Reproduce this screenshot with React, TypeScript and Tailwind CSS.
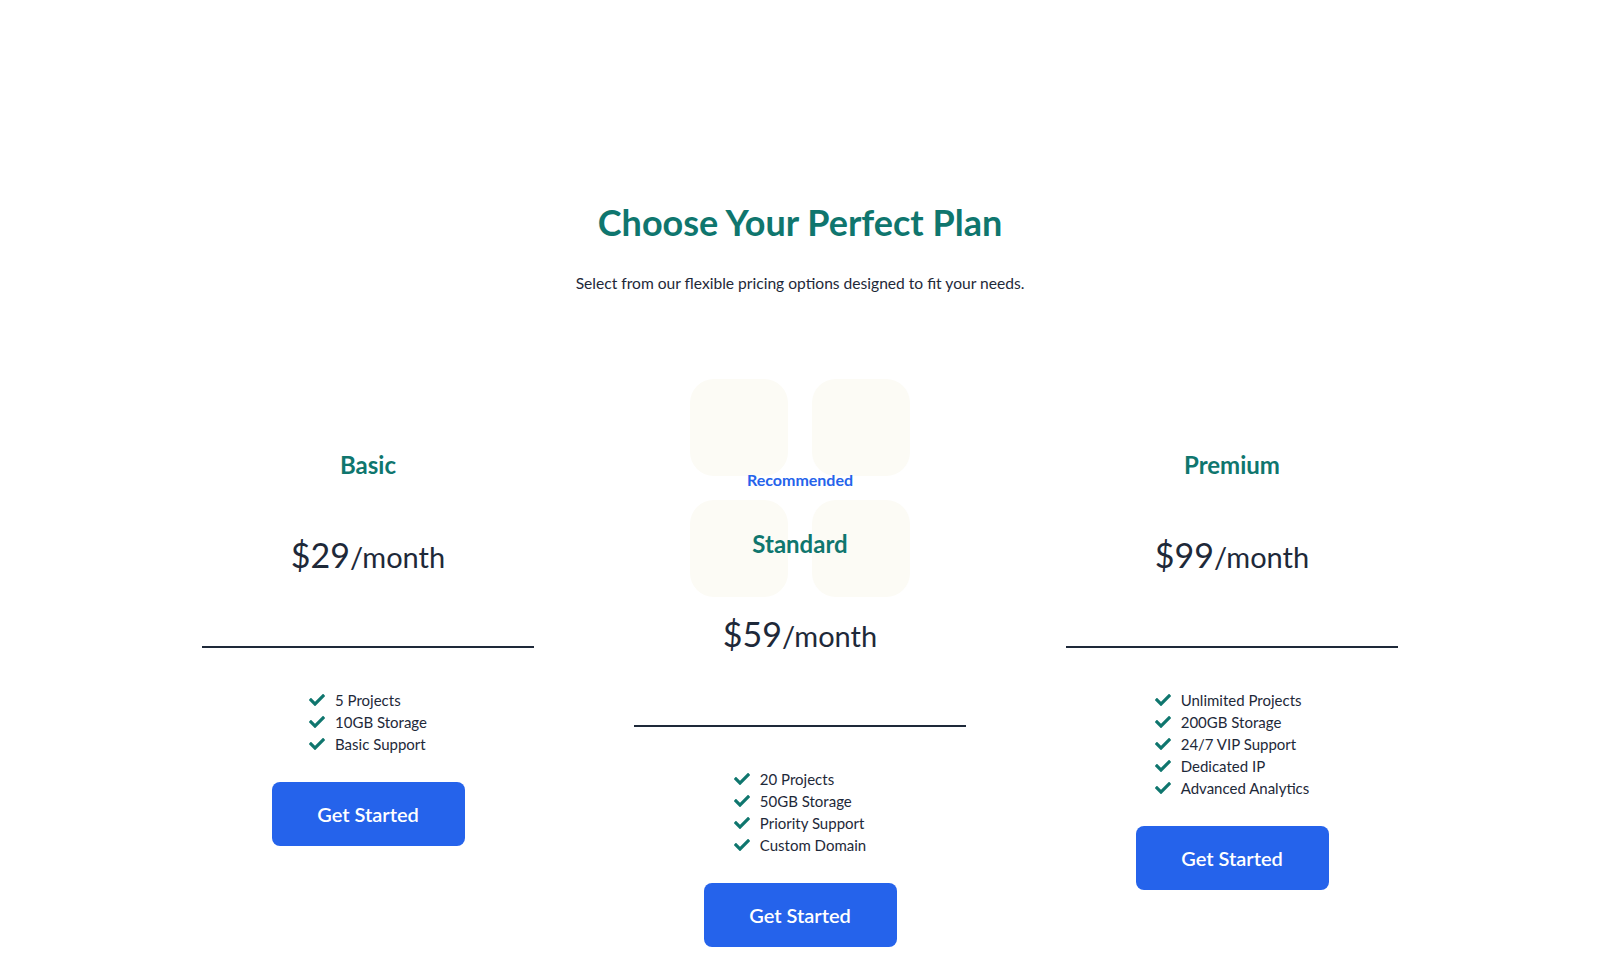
import { FaCheck } from "react-icons/fa";

interface Plan {
  name: string;
  price: string;
  features: string[];
  recommended?: boolean;
}

const plans: Plan[] = [
  { name: "Basic", price: "$29", features: ["5 Projects", "10GB Storage", "Basic Support"] },
  {
    name: "Standard",
    price: "$59",
    features: ["20 Projects", "50GB Storage", "Priority Support", "Custom Domain"],
    recommended: true,
  },
  {
    name: "Premium",
    price: "$99",
    features: ["Unlimited Projects", "200GB Storage", "24/7 VIP Support", "Dedicated IP", "Advanced Analytics"],
  },
];

const PlanCard = ({ plan }: { plan: Plan }) => {
  return (
    <div className={`relative flex flex-col items-center ${plan.recommended ? "pt-0" : "pt-[70px]"}`}>
      {plan.recommended && (
        <>
          <div className="absolute top-0 inset-x-0 mx-auto w-[220px] grid grid-cols-2 gap-[24px]">
            <div className="w-[98px] h-[97px] rounded-3xl bg-[#fcfbf5]" />
            <div className="w-[98px] h-[97px] rounded-3xl bg-[#fcfbf5]" />
            <div className="w-[98px] h-[97px] rounded-3xl bg-[#fcfbf5]" />
            <div className="w-[98px] h-[97px] rounded-3xl bg-[#fcfbf5]" />
          </div>
          <span className="relative mt-[89px] text-base leading-6 font-bold text-[#2563eb]">Recommended</span>
        </>
      )}
      <h2 className={`relative text-2xl leading-8 font-bold text-[#0f766e] ${plan.recommended ? "mt-[36px]" : ""}`}>
        {plan.name}
      </h2>
      <p className="relative mt-[54px] text-gray-800 leading-10">
        <span className="text-[34px]">{plan.price}</span>
        <span className="text-[29px]">/month</span>
      </p>
      <div className="w-4/5 mt-[64px] border-t-2 border-gray-800" />
      <ul className="mt-[41px] flex flex-col">
        {plan.features.map((f) => (
          <li key={f} className="flex items-center gap-2.5 text-[15px] leading-[22px] text-gray-800">
            <FaCheck className="w-4 h-4 text-[#0f766e]" />
            <span>{f}</span>
          </li>
        ))}
      </ul>
      <button className="mt-[27px] w-[193px] h-16 rounded-lg bg-[#2563eb] text-white text-xl font-semibold">
        Get Started
      </button>
    </div>
  );
};

export default function App() {
  return (
    <div className="min-h-screen bg-white font-['Lato',sans-serif] pt-[202px] pb-10">
      <div className="text-center">
        <h1 className="text-4xl leading-10 font-bold text-[#0f766e]">Choose Your Perfect Plan</h1>
        <p className="mt-[29px] text-[15.6px] leading-6 text-gray-800">
          Select from our flexible pricing options designed to fit your needs.
        </p>
      </div>
      <div className="max-w-7xl mx-auto mt-[84px] grid grid-cols-3 gap-4 items-start">
        {plans.map((p) => (
          <PlanCard key={p.name} plan={p} />
        ))}
      </div>
    </div>
  );
}
